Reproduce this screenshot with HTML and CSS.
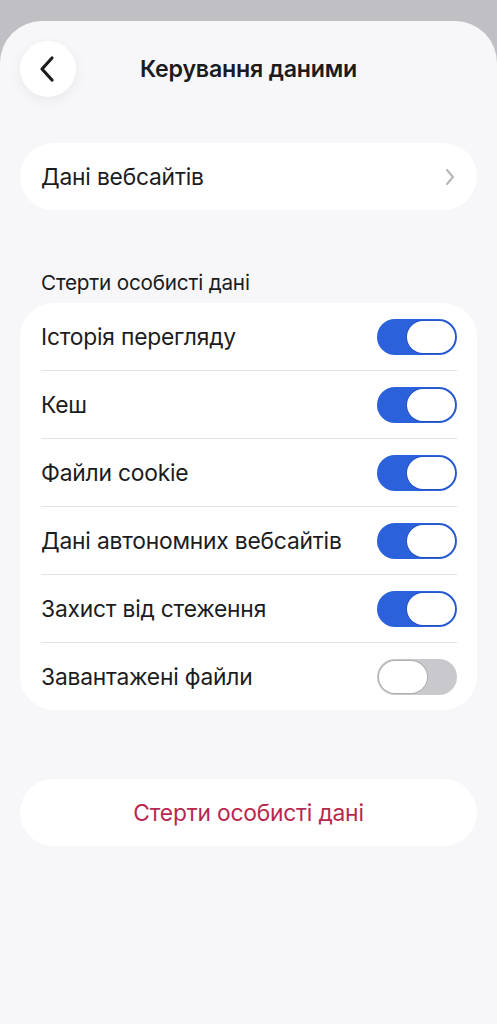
FILE: index.html
```html
<!DOCTYPE html>
<html lang="uk">
<head>
<meta charset="utf-8">
<link rel="stylesheet" href="styles.css">
</head>
<body>
<div class="sheet">
  <header class="topbar">
    <button class="back" aria-label="Назад">
      <svg width="18" height="28" viewBox="0 0 18 28"><path d="M14 3 L4 14 L14 25" fill="none" stroke="#1c1c1e" stroke-width="3.2" stroke-linecap="round" stroke-linejoin="round"/></svg>
    </button>
    <h1 class="title">Керування даними</h1>
  </header>

  <div class="card link-card">
    <span class="label">Дані вебсайтів</span>
    <svg class="chev" width="10" height="18" viewBox="0 0 10 18"><path d="M2 2 L8 9 L2 16" fill="none" stroke="#b9b9bd" stroke-width="2.2" stroke-linecap="round" stroke-linejoin="round"/></svg>
  </div>

  <div class="section-title">Стерти особисті дані</div>
  <div class="card list">
    <div class="row"><span class="label">Історія перегляду</span><span class="toggle on"><span class="knob"></span></span></div>
    <div class="row"><span class="label">Кеш</span><span class="toggle on"><span class="knob"></span></span></div>
    <div class="row"><span class="label">Файли cookie</span><span class="toggle on"><span class="knob"></span></span></div>
    <div class="row"><span class="label">Дані автономних вебсайтів</span><span class="toggle on"><span class="knob"></span></span></div>
    <div class="row"><span class="label">Захист від стеження</span><span class="toggle on"><span class="knob"></span></span></div>
    <div class="row"><span class="label">Завантажені файли</span><span class="toggle off"><span class="knob"></span></span></div>
  </div>

  <div class="card action">Стерти особисті дані</div>
</div>
</body>
</html>
```

FILE: styles.css
```css
* { box-sizing: border-box; }
html, body { margin: 0; padding: 0; }
body {
  background: #c0bfc4;
  font-family: Inter, "Noto Sans", "Liberation Sans", sans-serif;
  color: #1c1c1e;
  height: 1024px;
  overflow: hidden;
  padding-top: 21px;
}
.sheet {
  background: #f7f7fa;
  border-radius: 42px 42px 0 0;
  height: 1003px;
  padding: 20px 20px 0;
}
.topbar {
  position: relative;
  height: 56px;
  display: flex;
  align-items: center;
  justify-content: center;
}
.back {
  position: absolute;
  left: 0;
  top: 0;
  width: 56px;
  height: 56px;
  border-radius: 50%;
  border: none;
  background: #ffffff;
  box-shadow: 0 4px 14px rgba(0,0,0,0.06);
  display: flex;
  align-items: center;
  justify-content: center;
  padding: 0 2px 0 0;
}
.title {
  margin: 0;
  font-size: 23.2px;
  font-weight: 600;
  letter-spacing: -0.2px;
}
.card {
  background: #ffffff;
  border-radius: 34px;
}
.link-card {
  margin-top: 46px;
  height: 67px;
  display: flex;
  align-items: center;
  justify-content: space-between;
  padding: 0 22px 0 21px;
}
.label {
  font-size: 22.8px;
  font-weight: 400;
  letter-spacing: -0.2px;
}
.section-title {
  margin-top: 62px;
  padding-left: 21px;
  font-size: 20.7px;
  line-height: 22px;
  letter-spacing: -0.2px;
}
.list {
  margin-top: 9px;
  padding: 0 20px 0 21px;
}
.row {
  height: 68px;
  display: flex;
  align-items: center;
  justify-content: space-between;
  border-bottom: 1px solid #e3e3e6;
}
.row:last-child { border-bottom: none; height: 67px; }
.toggle {
  width: 80px;
  height: 36px;
  border-radius: 18px;
  display: flex;
  align-items: center;
  padding: 0 2px;
}
.toggle.on { background: #2b61da; justify-content: flex-end; }
.toggle.off { background: #c9c9cd; justify-content: flex-start; }
.knob {
  width: 48px;
  height: 32px;
  border-radius: 16px;
  background: #ffffff;
}
.toggle.on .knob { box-shadow: 0 0 0 1px rgba(30,70,180,0.5); }
.toggle.off .knob { box-shadow: 0 0 0 1px rgba(150,150,155,0.5); }
.action {
  margin-top: 69px;
  height: 67px;
  display: flex;
  align-items: center;
  justify-content: center;
  color: #b7284f;
  font-size: 22.8px;
  letter-spacing: -0.2px;
}
```
